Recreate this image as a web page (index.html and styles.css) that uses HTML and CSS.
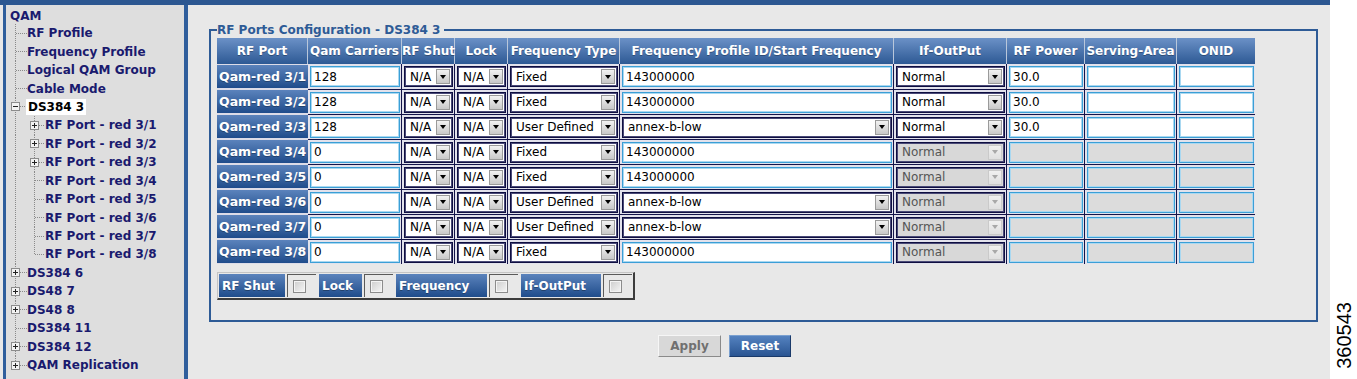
FILE: index.html
```html
<!DOCTYPE html>
<html>
<head>
    <title>RF Ports Configuration</title>
    <link rel="stylesheet" href="styles.css">
</head>
<body>

<div class="shell">
    <div class="nav">
        <div class="node root"><span class="lbl">QAM</span></div>
        <div class="node"><span class="cn"></span><span class="lbl">RF Profile</span></div>
        <div class="node"><span class="cn"></span><span class="lbl">Frequency Profile</span></div>
        <div class="node"><span class="cn"></span><span class="lbl">Logical QAM Group</span></div>
        <div class="node"><span class="cn"></span><span class="lbl">Cable Mode</span></div>
        <div class="node"><span class="cn"><svg class="tog" width="9" height="9"><rect x="0.5" y="0.5" width="8" height="8" fill="#f2f2f2" stroke="#8c8c8c"/><path d="M2 4.5h5" stroke="#222"/></svg></span><span class="lbl current">DS384 3</span></div>
        <div class="node"><span class="rail"></span><span class="cn sub"><svg class="tog" width="9" height="9"><rect x="0.5" y="0.5" width="8" height="8" fill="#f2f2f2" stroke="#8c8c8c"/><path d="M2 4.5h5M4.5 2v5" stroke="#222"/></svg></span><span class="lbl">RF Port - red 3/1</span></div>
        <div class="node"><span class="rail"></span><span class="cn sub"><svg class="tog" width="9" height="9"><rect x="0.5" y="0.5" width="8" height="8" fill="#f2f2f2" stroke="#8c8c8c"/><path d="M2 4.5h5M4.5 2v5" stroke="#222"/></svg></span><span class="lbl">RF Port - red 3/2</span></div>
        <div class="node"><span class="rail"></span><span class="cn sub"><svg class="tog" width="9" height="9"><rect x="0.5" y="0.5" width="8" height="8" fill="#f2f2f2" stroke="#8c8c8c"/><path d="M2 4.5h5M4.5 2v5" stroke="#222"/></svg></span><span class="lbl">RF Port - red 3/3</span></div>
        <div class="node"><span class="rail"></span><span class="cn sub"></span><span class="lbl">RF Port - red 3/4</span></div>
        <div class="node"><span class="rail"></span><span class="cn sub"></span><span class="lbl">RF Port - red 3/5</span></div>
        <div class="node"><span class="rail"></span><span class="cn sub"></span><span class="lbl">RF Port - red 3/6</span></div>
        <div class="node"><span class="rail"></span><span class="cn sub"></span><span class="lbl">RF Port - red 3/7</span></div>
        <div class="node"><span class="rail"></span><span class="cn sub end"></span><span class="lbl">RF Port - red 3/8</span></div>
        <div class="node"><span class="cn"><svg class="tog" width="9" height="9"><rect x="0.5" y="0.5" width="8" height="8" fill="#f2f2f2" stroke="#8c8c8c"/><path d="M2 4.5h5M4.5 2v5" stroke="#222"/></svg></span><span class="lbl">DS384 6</span></div>
        <div class="node"><span class="cn"><svg class="tog" width="9" height="9"><rect x="0.5" y="0.5" width="8" height="8" fill="#f2f2f2" stroke="#8c8c8c"/><path d="M2 4.5h5M4.5 2v5" stroke="#222"/></svg></span><span class="lbl">DS48 7</span></div>
        <div class="node"><span class="cn"><svg class="tog" width="9" height="9"><rect x="0.5" y="0.5" width="8" height="8" fill="#f2f2f2" stroke="#8c8c8c"/><path d="M2 4.5h5M4.5 2v5" stroke="#222"/></svg></span><span class="lbl">DS48 8</span></div>
        <div class="node"><span class="cn"></span><span class="lbl">DS384 11</span></div>
        <div class="node"><span class="cn"><svg class="tog" width="9" height="9"><rect x="0.5" y="0.5" width="8" height="8" fill="#f2f2f2" stroke="#8c8c8c"/><path d="M2 4.5h5M4.5 2v5" stroke="#222"/></svg></span><span class="lbl">DS384 12</span></div>
        <div class="node"><span class="cn end"><svg class="tog" width="9" height="9"><rect x="0.5" y="0.5" width="8" height="8" fill="#f2f2f2" stroke="#8c8c8c"/><path d="M2 4.5h5M4.5 2v5" stroke="#222"/></svg></span><span class="lbl">QAM Replication</span></div>
    </div>

    <div class="main">
        <fieldset class="cfg">
            <legend>RF Ports Configuration - DS384 3</legend>
            <table class="grid">
                <colgroup>
                    <col style="width:91px"><col style="width:94px"><col style="width:53px"><col style="width:53px"><col style="width:112px">
                    <col style="width:274px"><col style="width:113px"><col style="width:78px"><col style="width:92px"><col style="width:78px">
                </colgroup>
                <thead>
                    <tr>
                        <th>RF Port</th>
                        <th>Qam Carriers</th>
                        <th>RF Shut</th>
                        <th>Lock</th>
                        <th>Frequency Type</th>
                        <th>Frequency Profile ID/Start Frequency</th>
                        <th>If-OutPut</th>
                        <th>RF Power</th>
                        <th>Serving-Area</th>
                        <th>ONID</th>
                    </tr>
                </thead>
                <tbody>
                    <tr>
                        <th>Qam-red 3/1</th>
                        <td><input class="txt" type="text" value="128"></td>
                        <td><div class="sel"><span class="val">N/A</span><span class="arrow"></span></div></td>
                        <td><div class="sel"><span class="val">N/A</span><span class="arrow"></span></div></td>
                        <td><div class="sel"><span class="val">Fixed</span><span class="arrow"></span></div></td>
                        <td><input class="txt" type="text" value="143000000"></td>
                        <td><div class="sel"><span class="val">Normal</span><span class="arrow"></span></div></td>
                        <td><input class="txt" type="text" value="30.0"></td>
                        <td><input class="txt" type="text" value=""></td>
                        <td><input class="txt" type="text" value=""></td>
                    </tr>
                    <tr>
                        <th>Qam-red 3/2</th>
                        <td><input class="txt" type="text" value="128"></td>
                        <td><div class="sel"><span class="val">N/A</span><span class="arrow"></span></div></td>
                        <td><div class="sel"><span class="val">N/A</span><span class="arrow"></span></div></td>
                        <td><div class="sel"><span class="val">Fixed</span><span class="arrow"></span></div></td>
                        <td><input class="txt" type="text" value="143000000"></td>
                        <td><div class="sel"><span class="val">Normal</span><span class="arrow"></span></div></td>
                        <td><input class="txt" type="text" value="30.0"></td>
                        <td><input class="txt" type="text" value=""></td>
                        <td><input class="txt" type="text" value=""></td>
                    </tr>
                    <tr>
                        <th>Qam-red 3/3</th>
                        <td><input class="txt" type="text" value="128"></td>
                        <td><div class="sel"><span class="val">N/A</span><span class="arrow"></span></div></td>
                        <td><div class="sel"><span class="val">N/A</span><span class="arrow"></span></div></td>
                        <td><div class="sel"><span class="val">User Defined</span><span class="arrow"></span></div></td>
                        <td><div class="sel"><span class="val">annex-b-low</span><span class="arrow"></span></div></td>
                        <td><div class="sel"><span class="val">Normal</span><span class="arrow"></span></div></td>
                        <td><input class="txt" type="text" value="30.0"></td>
                        <td><input class="txt" type="text" value=""></td>
                        <td><input class="txt" type="text" value=""></td>
                    </tr>
                    <tr>
                        <th>Qam-red 3/4</th>
                        <td><input class="txt" type="text" value="0"></td>
                        <td><div class="sel"><span class="val">N/A</span><span class="arrow"></span></div></td>
                        <td><div class="sel"><span class="val">N/A</span><span class="arrow"></span></div></td>
                        <td><div class="sel"><span class="val">Fixed</span><span class="arrow"></span></div></td>
                        <td><input class="txt" type="text" value="143000000"></td>
                        <td><div class="sel off"><span class="val">Normal</span><span class="arrow"></span></div></td>
                        <td><input class="txt off" type="text" value="" disabled></td>
                        <td><input class="txt off" type="text" value="" disabled></td>
                        <td><input class="txt off" type="text" value="" disabled></td>
                    </tr>
                    <tr>
                        <th>Qam-red 3/5</th>
                        <td><input class="txt" type="text" value="0"></td>
                        <td><div class="sel"><span class="val">N/A</span><span class="arrow"></span></div></td>
                        <td><div class="sel"><span class="val">N/A</span><span class="arrow"></span></div></td>
                        <td><div class="sel"><span class="val">Fixed</span><span class="arrow"></span></div></td>
                        <td><input class="txt" type="text" value="143000000"></td>
                        <td><div class="sel off"><span class="val">Normal</span><span class="arrow"></span></div></td>
                        <td><input class="txt off" type="text" value="" disabled></td>
                        <td><input class="txt off" type="text" value="" disabled></td>
                        <td><input class="txt off" type="text" value="" disabled></td>
                    </tr>
                    <tr>
                        <th>Qam-red 3/6</th>
                        <td><input class="txt" type="text" value="0"></td>
                        <td><div class="sel"><span class="val">N/A</span><span class="arrow"></span></div></td>
                        <td><div class="sel"><span class="val">N/A</span><span class="arrow"></span></div></td>
                        <td><div class="sel"><span class="val">User Defined</span><span class="arrow"></span></div></td>
                        <td><div class="sel"><span class="val">annex-b-low</span><span class="arrow"></span></div></td>
                        <td><div class="sel off"><span class="val">Normal</span><span class="arrow"></span></div></td>
                        <td><input class="txt off" type="text" value="" disabled></td>
                        <td><input class="txt off" type="text" value="" disabled></td>
                        <td><input class="txt off" type="text" value="" disabled></td>
                    </tr>
                    <tr>
                        <th>Qam-red 3/7</th>
                        <td><input class="txt" type="text" value="0"></td>
                        <td><div class="sel"><span class="val">N/A</span><span class="arrow"></span></div></td>
                        <td><div class="sel"><span class="val">N/A</span><span class="arrow"></span></div></td>
                        <td><div class="sel"><span class="val">User Defined</span><span class="arrow"></span></div></td>
                        <td><div class="sel"><span class="val">annex-b-low</span><span class="arrow"></span></div></td>
                        <td><div class="sel off"><span class="val">Normal</span><span class="arrow"></span></div></td>
                        <td><input class="txt off" type="text" value="" disabled></td>
                        <td><input class="txt off" type="text" value="" disabled></td>
                        <td><input class="txt off" type="text" value="" disabled></td>
                    </tr>
                    <tr>
                        <th>Qam-red 3/8</th>
                        <td><input class="txt" type="text" value="0"></td>
                        <td><div class="sel"><span class="val">N/A</span><span class="arrow"></span></div></td>
                        <td><div class="sel"><span class="val">N/A</span><span class="arrow"></span></div></td>
                        <td><div class="sel"><span class="val">Fixed</span><span class="arrow"></span></div></td>
                        <td><input class="txt" type="text" value="143000000"></td>
                        <td><div class="sel off"><span class="val">Normal</span><span class="arrow"></span></div></td>
                        <td><input class="txt off" type="text" value="" disabled></td>
                        <td><input class="txt off" type="text" value="" disabled></td>
                        <td><input class="txt off" type="text" value="" disabled></td>
                    </tr>
                </tbody>
            </table>

            <div class="opts">
                <span class="opt-lbl w-shut">RF Shut</span>
                <span class="opt-box"><input type="checkbox"></span>
                <span class="opt-lbl w-lock">Lock</span>
                <span class="opt-box"><input type="checkbox"></span>
                <span class="opt-lbl w-freq">Frequency</span>
                <span class="opt-box"><input type="checkbox"></span>
                <span class="opt-lbl w-out">If-OutPut</span>
                <span class="opt-box"><input type="checkbox"></span>
            </div>
        </fieldset>

        <div class="actions">
            <button class="apply-button" type="button">Apply</button>
            <button class="reset-button" type="button">Reset</button>
        </div>
    </div>
</div>

<div class="fig"><span>360543</span></div>

</body>
</html>
```

FILE: styles.css
```css
body {
    margin: 0;
    display: flex;
    background-color: #fff;
    font-family: "DejaVu Sans", Verdana, sans-serif;
}

.shell {
    width: 1330px;
    height: 379px;
    box-sizing: border-box;
    border-top: 5px solid #2c5791;
    display: flex;
    background-color: #e8e8e8;
}

/* Tree on the left */
.nav {
    flex: none;
    margin-left: 3px;
    width: 185px;
    padding: 3px 0 0 4px;
    box-sizing: border-box;
    border-left: 3px solid #2f5e9c;
    border-right: 4px solid #2f5e9c;
    background-color: #dedede;
}

.node {
    display: flex;
    align-items: center;
    height: 18.45px;
    font-size: 12px;
    font-weight: bold;
    color: #1a1a6e;
    white-space: nowrap;
}

.node.root {
    height: 16px;
}

.cn,
.rail {
    align-self: stretch;
    display: flex;
    align-items: center;
    flex: none;
}

.cn {
    width: 17px;
    background-image:
        repeating-linear-gradient(to right, #8a8a8a 0 1px, transparent 1px 2px),
        repeating-linear-gradient(to bottom, #8a8a8a 0 1px, transparent 1px 2px);
    background-size: calc(100% - 6px) 1px, 1px 100%;
    background-position: 6px 50%, 5px 0;
    background-repeat: no-repeat;
}

.cn.end {
    background-size: calc(100% - 6px) 1px, 1px 50%;
}

.cn.sub {
    width: 16px;
}

.rail {
    width: 19px;
    background-image: repeating-linear-gradient(to bottom, #8a8a8a 0 1px, transparent 1px 2px);
    background-size: 1px 100%;
    background-position: 5px 0;
    background-repeat: no-repeat;
}

.tog {
    display: block;
    margin-left: 1px;
}

.lbl.current {
    background-color: #fff;
    color: #000;
    padding: 1px 2px;
    margin-left: -1px;
}

/* Main area */
.main {
    flex: 1;
    padding: 18px 12px 0 21px;
}

.cfg {
    margin: 0;
    padding: 1px 6px 20px 6px;
    border: 2px solid #2e5b96;
    min-width: 0;
}

.cfg legend {
    padding: 0 4px 0 0;
    color: #2e5b96;
    font-size: 12px;
    font-weight: bold;
}

.grid {
    width: 1038px;
    table-layout: fixed;
    border-collapse: separate;
    border-spacing: 0;
    font-size: 12px;
}

.grid thead th {
    height: 26px;
    padding: 0;
    box-sizing: border-box;
    background: linear-gradient(#6b91c7, #2d5994);
    color: #fff;
    font-weight: bold;
    white-space: nowrap;
    border-right: 1px solid #b9c7db;
    text-shadow: 0 1px 0 rgba(0, 0, 0, 0.3);
}

.grid thead th:last-child {
    border-right: 0;
}

.grid tbody th {
    height: 25px;
    box-sizing: border-box;
    padding: 0 2px 0 2px;
    text-align: left;
    font-size: 12.5px;
    white-space: nowrap;
    color: #fff;
    background: linear-gradient(#5b83bc, #1f4c8b);
    border-top: 1px solid #dcdce8;
    border-bottom: 1px solid #dcdce8;
    text-shadow: 0 1px 0 rgba(0, 0, 0, 0.3);
}

.grid tbody td {
    height: 25px;
    box-sizing: border-box;
    padding: 0 1px 0 2px;
    background-color: #e2e2ec;
    border-right: 1px solid #14144a;
    vertical-align: middle;
}

.grid tbody td:last-child {
    border-right: 0;
}

.grid tbody tr + tr td {
    border-top: 1px solid #14144a;
}

.txt {
    display: block;
    width: 100%;
    height: 21px;
    box-sizing: border-box;
    margin: 0;
    padding: 0 3px;
    border: 1px solid #3b9fd6;
    box-shadow: inset 0 0 0 1px #a9d8f1;
    background-color: #fff;
    color: #000;
    font-family: "DejaVu Sans", Verdana, sans-serif;
    font-size: 12px;
    outline: none;
}

.txt.off {
    background-color: #dcdcdc;
}

.sel {
    display: flex;
    align-items: center;
    height: 21px;
    box-sizing: border-box;
    padding: 0 2px 0 5px;
    border: 1px solid #0e0e40;
    box-shadow: inset 0 0 0 1px #4a4a78;
    background-color: #fff;
    color: #000;
    white-space: nowrap;
}

.sel .val {
    flex: 1;
    overflow: hidden;
}

.sel .arrow {
    width: 14px;
    height: 15px;
    box-sizing: border-box;
    border: 1px solid #9a9a9a;
    background: linear-gradient(#f2f2f2, #c8c8c8);
    display: flex;
    align-items: center;
    justify-content: center;
}

.sel .arrow::after {
    content: "";
    border-left: 3.5px solid transparent;
    border-right: 3.5px solid transparent;
    border-top: 4px solid #000;
}

.sel.off {
    background-color: #d8d8d8;
    color: #555;
}

.sel.off .arrow {
    border-color: #cacaca;
    background: linear-gradient(#f0f0f0, #e0e0e0);
}

.sel.off .arrow::after {
    border-top-color: #a8a8a8;
}

/* Bulk option bar */
.opts {
    display: flex;
    width: fit-content;
    margin-top: 8px;
    padding: 1px;
    gap: 2px;
    border: 1px solid #c4c4c4;
    border-right: 2px solid #3c3c3c;
    border-bottom: 2px solid #3c3c3c;
}

.opt-lbl {
    height: 23px;
    box-sizing: border-box;
    padding: 0 3px;
    display: flex;
    align-items: center;
    background: linear-gradient(#5b83bc, #1f4c8b);
    color: #fff;
    font-size: 12px;
    font-weight: bold;
    text-shadow: 0 1px 0 rgba(0, 0, 0, 0.3);
    margin-left: 1px;
}

.opt-lbl.w-shut { width: 66px; margin-left: 0; }
.opt-lbl.w-lock { width: 43px; }
.opt-lbl.w-freq { width: 91px; }
.opt-lbl.w-out { width: 80px; }

.opt-box {
    width: 29px;
    height: 23px;
    box-sizing: border-box;
    border-top: 1px solid #5a5a5a;
    border-left: 1px solid #5a5a5a;
    display: flex;
    align-items: center;
    padding-left: 5px;
}

.opt-box input {
    appearance: none;
    margin: 0;
    width: 13px;
    height: 13px;
    border: 1px solid #8c8c8c;
    box-shadow: inset 0 0 0 1px #f4f4f4;
    background: linear-gradient(135deg, #cdcdcd, #f6f6f6);
}

/* Buttons */
.actions {
    display: flex;
    gap: 8px;
    margin: 13px 0 0 449px;
}

.apply-button,
.reset-button {
    height: 22px;
    padding: 0;
    font-family: "DejaVu Sans", Verdana, sans-serif;
    font-size: 12px;
    font-weight: bold;
    border: 1px solid;
    cursor: pointer;
}

.apply-button {
    width: 63px;
    background-color: #d8d8d8;
    color: #707070;
    border-color: #f6f6f6 #8a8a8a #8a8a8a #f6f6f6;
}

.reset-button {
    width: 62px;
    background: linear-gradient(#5482c0, #2a5592);
    color: #fff;
    border-color: #7aa0d0 #1a3a6a #1a3a6a #7aa0d0;
}

/* Figure number */
.fig {
    width: 27px;
    display: flex;
    align-items: flex-end;
    padding-bottom: 10px;
    box-sizing: border-box;
    height: 379px;
}

.fig span {
    writing-mode: vertical-rl;
    transform: rotate(180deg);
    font-family: "Liberation Sans", Arial, sans-serif;
    font-size: 20px;
    line-height: 20px;
    margin-left: 4px;
    color: #000;
}
```
